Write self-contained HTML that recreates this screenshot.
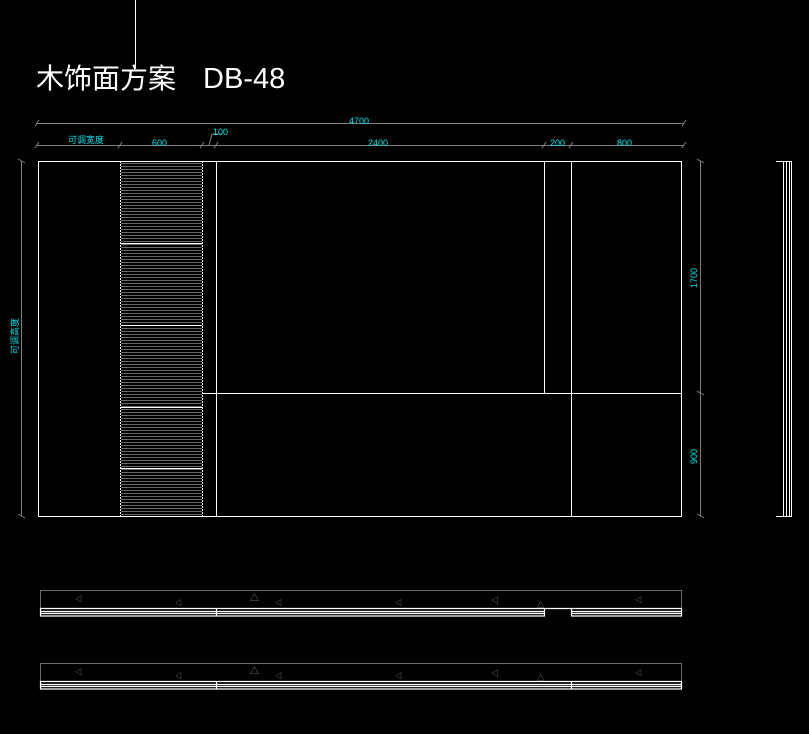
<!DOCTYPE html>
<html><head><meta charset="utf-8"><style>
html,body{margin:0;padding:0;background:#000;width:809px;height:734px;overflow:hidden}
svg{display:block}
text{font-family:"Liberation Sans","Noto Sans CJK SC",sans-serif}
</style></head><body>
<svg width="809" height="734" viewBox="0 0 809 734" xmlns="http://www.w3.org/2000/svg">
<defs>
<pattern id="h" x="0" y="162" width="10" height="3" patternUnits="userSpaceOnUse">
<rect x="0" y="1" width="10" height="1" fill="#6a6a6a"/>
</pattern>
</defs>
<rect width="809" height="734" fill="#000"/>
<line x1="135.5" y1="0" x2="135.5" y2="68" stroke="#fff" stroke-width="1"/>
<text x="36" y="88" font-size="28" fill="#fff" font-family="'Noto Sans CJK SC',sans-serif">木饰面方案</text>
<text x="203" y="88" font-size="29" fill="#fff">DB-48</text>

<!-- dims -->
<g stroke="#808080" stroke-width="1" fill="none">
<line x1="37" y1="123.5" x2="684" y2="123.5"/>
<line x1="37" y1="145.5" x2="684" y2="145.5"/>
<line x1="21.5" y1="161" x2="21.5" y2="516"/>
<line x1="700.5" y1="161" x2="700.5" y2="516"/>
<polyline points="209,145 212,134 222,134"/>
<g>
<line x1="35" y1="126" x2="39" y2="120"/><line x1="682" y1="126" x2="686" y2="120"/>
<line x1="35" y1="148" x2="39" y2="142"/><line x1="118" y1="148" x2="122" y2="142"/>
<line x1="200" y1="148" x2="204" y2="142"/><line x1="214" y1="148" x2="218" y2="142"/>
<line x1="542" y1="148" x2="546" y2="142"/><line x1="569" y1="148" x2="573" y2="142"/>
<line x1="682" y1="148" x2="686" y2="142"/>
<line x1="18" y1="159" x2="25" y2="163"/><line x1="18" y1="514" x2="25" y2="518"/>
<line x1="697" y1="159" x2="704" y2="163"/><line x1="697" y1="391" x2="704" y2="395"/><line x1="697" y1="514" x2="704" y2="518"/>
</g>
</g>
<g fill="#00e5ee" font-size="9">
<text x="349" y="124">4700</text>
<text x="68" y="143" font-family="'Noto Sans CJK SC',sans-serif">可调宽度</text>
<text x="152" y="146">600</text>
<text x="213" y="135">100</text>
<text x="368" y="146">2400</text>
<text x="550" y="146">200</text>
<text x="617" y="146">800</text>
<text transform="translate(697,288) rotate(-90)">1700</text>
<text transform="translate(697,464) rotate(-90)">900</text>
<text transform="translate(18,354) rotate(-90)" font-family="'Noto Sans CJK SC',sans-serif">可调高度</text>
</g>

<!-- hatch -->
<rect x="121" y="162" width="81" height="354" fill="url(#h)"/>
<g stroke="#fff" stroke-width="1" fill="none">
<rect x="38.5" y="161.5" width="643" height="355"/>
<line x1="120.5" y1="161" x2="120.5" y2="516" stroke-dasharray="2,1"/>
<line x1="202.5" y1="161" x2="202.5" y2="516" stroke-dasharray="2,1"/>
<line x1="216.5" y1="161" x2="216.5" y2="516"/>
<line x1="544.5" y1="161" x2="544.5" y2="393"/>
<line x1="571.5" y1="161" x2="571.5" y2="516"/>
<line x1="202" y1="393.5" x2="681" y2="393.5"/>
<line x1="121" y1="243.5" x2="202" y2="243.5"/>
<line x1="121" y1="325.5" x2="202" y2="325.5"/>
<line x1="121" y1="407.5" x2="202" y2="407.5"/>
<line x1="121" y1="468.5" x2="202" y2="468.5"/>
<!-- side view -->
<line x1="776" y1="161.5" x2="792" y2="161.5"/>
<line x1="776" y1="516.5" x2="792" y2="516.5"/>
<line x1="783.5" y1="161" x2="783.5" y2="516"/>
<line x1="786.5" y1="161" x2="786.5" y2="516"/>
<line x1="789.5" y1="161" x2="789.5" y2="516"/>
<line x1="791.5" y1="161" x2="791.5" y2="516"/>
</g>

<!-- bottom strips -->
<g id="s1">
<rect x="40.5" y="590.5" width="641" height="18" fill="none" stroke="#6a6a6a"/>
<g fill="#888">
<text x="75" y="601" font-size="7">◁</text><text x="175" y="605" font-size="7">◁</text>
<text x="250" y="601" font-size="9">△</text><text x="275" y="605" font-size="7">◁</text>
<text x="395" y="605" font-size="7">◁</text><text x="491" y="603" font-size="8">◁</text>
<text x="537" y="607" font-size="7">△</text><text x="635" y="602" font-size="7">◁</text>
</g>
<g stroke="#fff" stroke-width="1.2">
<line x1="40" y1="608.5" x2="682" y2="608.5"/>
<line x1="40" y1="611.5" x2="544" y2="611.5"/><line x1="572" y1="611.5" x2="682" y2="611.5"/>
<line x1="40" y1="613.5" x2="544" y2="613.5"/><line x1="572" y1="613.5" x2="682" y2="613.5"/>
<line x1="40" y1="616" x2="545" y2="616"/><line x1="571" y1="616" x2="682" y2="616"/>
<line x1="40.5" y1="608" x2="40.5" y2="616"/><line x1="681.5" y1="608" x2="681.5" y2="616"/>
<line x1="216.5" y1="608" x2="216.5" y2="616"/><line x1="544.5" y1="608" x2="544.5" y2="616"/><line x1="571.5" y1="608" x2="571.5" y2="616"/>
</g>
</g>
<g transform="translate(0,73)">
<rect x="40.5" y="590.5" width="641" height="18" fill="none" stroke="#6a6a6a"/>
<g fill="#888">
<text x="75" y="601" font-size="7">◁</text><text x="175" y="605" font-size="7">◁</text>
<text x="250" y="601" font-size="9">△</text><text x="275" y="605" font-size="7">◁</text>
<text x="395" y="605" font-size="7">◁</text><text x="491" y="603" font-size="8">◁</text>
<text x="537" y="607" font-size="7">△</text><text x="635" y="602" font-size="7">◁</text>
</g>
<g stroke="#fff" stroke-width="1.2">
<line x1="40" y1="608.5" x2="682" y2="608.5"/>
<line x1="40" y1="611.5" x2="682" y2="611.5"/>
<line x1="40" y1="613.5" x2="682" y2="613.5"/>
<line x1="40" y1="616" x2="682" y2="616"/>
<line x1="40.5" y1="608" x2="40.5" y2="616"/><line x1="681.5" y1="608" x2="681.5" y2="616"/>
<line x1="216.5" y1="608" x2="216.5" y2="616"/><line x1="571.5" y1="608" x2="571.5" y2="616"/>
</g>
</g>
</svg>
</body></html>
